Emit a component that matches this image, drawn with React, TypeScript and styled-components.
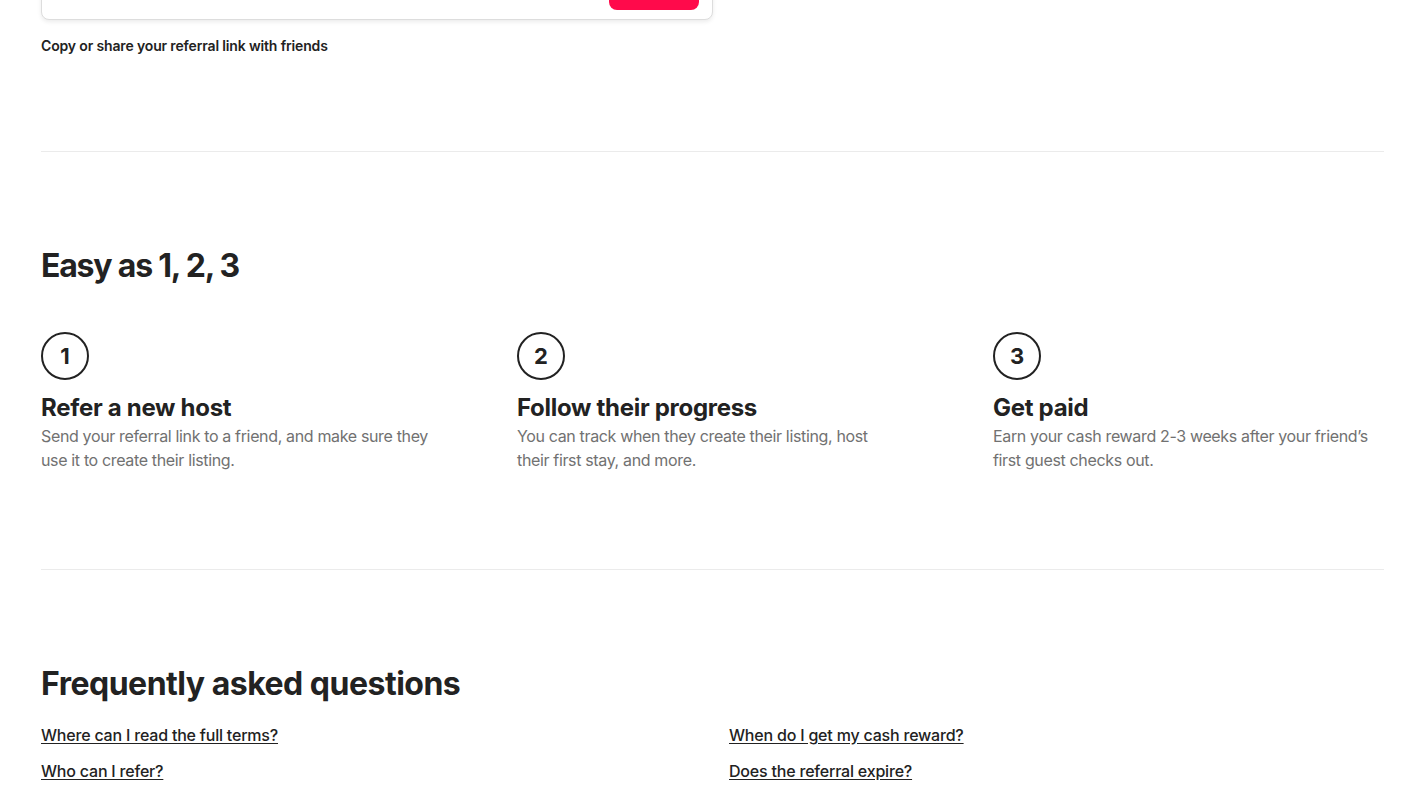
import React from "react";
import styled, { createGlobalStyle } from "styled-components";

const Global = createGlobalStyle`
  html, body { margin: 0; padding: 0; background: #ffffff; }
  body {
    font-family: Inter, "Noto Sans", "Liberation Sans", sans-serif;
    color: #222222;
    -webkit-font-smoothing: antialiased;
    overflow: hidden;
  }
`;

const Page = styled.main`
  padding: 0 40px 0 41px;
  width: 1424px;
  box-sizing: border-box;
`;

const ShareArea = styled.section`
  display: grid;
  grid-template-columns: 672px;
  padding-bottom: 96px;
  border-bottom: 1px solid #ebebeb;
`;

const LinkCard = styled.div`
  margin-top: -44px;
  height: 64px;
  box-sizing: border-box;
  border: 1px solid #dddddd;
  border-radius: 8px;
  box-shadow: 0 2px 4px rgba(0, 0, 0, 0.08);
  display: flex;
  align-items: flex-end;
  justify-content: flex-end;
  padding: 0 13px 9px 16px;
  background: #fff;
`;

const ShareButton = styled.button`
  width: 90px;
  height: 48px;
  border: none;
  border-radius: 8px;
  background: #ff0a4b;
  color: #fff;
  font: 600 16px Inter, sans-serif;
`;

const Caption = styled.p`
  margin: 17px 0 0;
  font-size: 14px;
  line-height: 18px;
  font-weight: 600;
  letter-spacing: -0.15px;
`;

const Section = styled.section<{ $last?: boolean }>`
  padding: 96px 0 ${(p) => (p.$last ? "0" : "97px")};
  border-bottom: ${(p) => (p.$last ? "none" : "1px solid #ebebeb")};
`;

const Heading = styled.h2<{ $tight?: boolean }>`
  margin: 0;
  font-size: 32px;
  line-height: 36px;
  font-weight: 700;
  letter-spacing: ${(p) => (p.$tight ? "-1.2px" : "-0.5px")};
`;

const Steps = styled.div`
  margin-top: 48px;
  display: grid;
  grid-template-columns: repeat(3, 448px);
  column-gap: 28px;
`;

const Step = styled.div`
  display: flex;
  flex-direction: column;
`;

const Circle = styled.div`
  width: 48px;
  height: 48px;
  box-sizing: border-box;
  border: 2px solid #222;
  border-radius: 50%;
  display: flex;
  align-items: center;
  justify-content: center;
  font-size: 22px;
  font-weight: 700;
`;

const StepTitle = styled.h3`
  margin: 14px 0 2px;
  font-size: 24px;
  line-height: 28px;
  font-weight: 700;
  letter-spacing: -0.3px;
`;

const StepText = styled.p<{ $measure: number }>`
  margin: 0;
  max-width: ${(p) => p.$measure}px;
  font-size: 16px;
  line-height: 24px;
  letter-spacing: -0.35px;
  color: #717171;
`;

const FaqGrid = styled.div`
  margin-top: 23px;
  display: grid;
  grid-template-columns: repeat(2, 672px);
  column-gap: 16px;
  row-gap: 16px;
`;

const FaqLink = styled.a`
  font-size: 16px;
  line-height: 20px;
  font-weight: 500;
  letter-spacing: -0.2px;
  color: #222;
  text-decoration: underline;
  text-underline-offset: 2px;
  justify-self: start;
`;

const steps = [
  {
    n: "1",
    title: "Refer a new host",
    text: "Send your referral link to a friend, and make sure they use it to create their listing.",
    measure: 394,
  },
  {
    n: "2",
    title: "Follow their progress",
    text: "You can track when they create their listing, host their first stay, and more.",
    measure: 370,
  },
  {
    n: "3",
    title: "Get paid",
    text: "Earn your cash reward 2-3 weeks after your friend’s first guest checks out.",
    measure: 394,
  },
];

const faqs = [
  "Where can I read the full terms?",
  "When do I get my cash reward?",
  "Who can I refer?",
  "Does the referral expire?",
];

export default function App() {
  return (
    <>
      <Global />
      <Page>
        <ShareArea>
          <LinkCard>
            <ShareButton aria-label="Share" />
          </LinkCard>
          <Caption>Copy or share your referral link with friends</Caption>
        </ShareArea>
        <Section>
          <Heading $tight>Easy as 1, 2, 3</Heading>
          <Steps>
            {steps.map((s) => (
              <Step key={s.n}>
                <Circle>{s.n}</Circle>
                <StepTitle>{s.title}</StepTitle>
                <StepText $measure={s.measure}>{s.text}</StepText>
              </Step>
            ))}
          </Steps>
        </Section>
        <Section $last>
          <Heading>Frequently asked questions</Heading>
          <FaqGrid>
            {faqs.map((q) => (
              <FaqLink key={q} href="#">
                {q}
              </FaqLink>
            ))}
          </FaqGrid>
        </Section>
      </Page>
    </>
  );
}
